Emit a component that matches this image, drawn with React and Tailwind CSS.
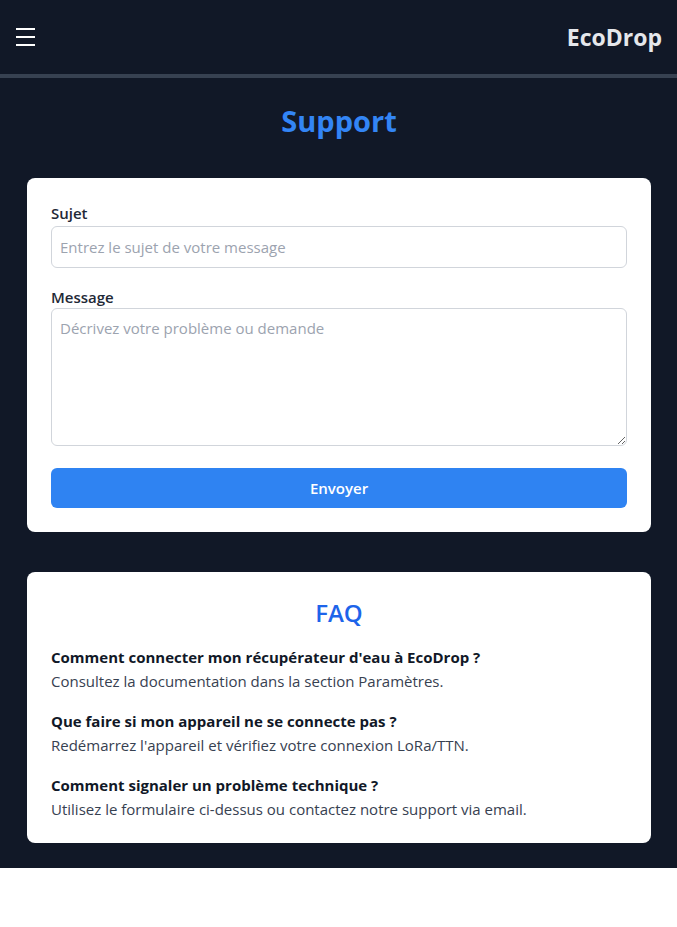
export default function App() {
  const faqs = [
    ["Comment connecter mon récupérateur d'eau à EcoDrop ?", "Consultez la documentation dans la section Paramètres."],
    ["Que faire si mon appareil ne se connecte pas ?", "Redémarrez l'appareil et vérifiez votre connexion LoRa/TTN."],
    ["Comment signaler un problème technique ?", "Utilisez le formulaire ci-dessus ou contactez notre support via email."],
  ];
  return (
    <div className="min-h-[927px] bg-white" style={{ fontFamily: '"Open Sans", "Noto Sans", sans-serif' }}>
      <header className="flex h-[78px] items-center justify-between border-b-4 border-[#374151] bg-[#111827] pl-4 pr-[15px]">
        <div className="flex w-[19px] flex-col gap-[6px]">
          <span className="block h-[2px] bg-white" />
          <span className="block h-[2px] bg-white" />
          <span className="block h-[2px] bg-white" />
        </div>
        <div className="text-[23px] font-bold leading-none text-[#e5e7eb]">EcoDrop</div>
      </header>
      <main className="bg-[#111827] pb-[25px] pl-[27px] pr-[26px] pt-[23px]">
        <h1 className="text-center text-[29px] font-bold leading-[40px] text-[#3385f5]">Support</h1>
        <section className="mt-[37px] rounded-lg bg-white p-6">
          <label className="block text-[15px] font-semibold leading-[22px] text-[#1f2937]">Sujet</label>
          <input
            className="mt-[2px] block h-[42px] w-full rounded-md border border-[#d1d5db] px-2 text-[15px] text-[#111827] placeholder:text-[#9ca3af] outline-none"
            placeholder="Entrez le sujet de votre message"
          />
          <label className="mt-[18px] block text-[15px] font-semibold leading-[22px] text-[#1f2937]">Message</label>
          <textarea
            className="mt-0 block h-[138px] w-full rounded-md border border-[#d1d5db] px-2 py-[8px] text-[15px] leading-[22px] text-[#111827] placeholder:text-[#9ca3af] outline-none"
            placeholder="Décrivez votre problème ou demande"
          />
          <button className="mt-[22px] flex h-[40px] w-full items-center justify-center rounded-md bg-[#2f83f2] text-[15px] font-semibold text-white">
            Envoyer
          </button>
        </section>
        <section className="mt-10 rounded-lg bg-white px-6 pb-[23px] pt-6">
          <h2 className="text-center text-[24px] font-semibold leading-[34px] text-[#1d64ea]">FAQ</h2>
          <div className="mt-4 flex flex-col gap-[18px]">
            {faqs.map(([q, a]) => (
              <div key={q}>
                <p className="text-[15px] font-bold leading-[22px] text-[#111827]">{q}</p>
                <p className="mt-[2px] text-[15px] leading-[22px] text-[#374151]">{a}</p>
              </div>
            ))}
          </div>
        </section>
      </main>
    </div>
  );
}
